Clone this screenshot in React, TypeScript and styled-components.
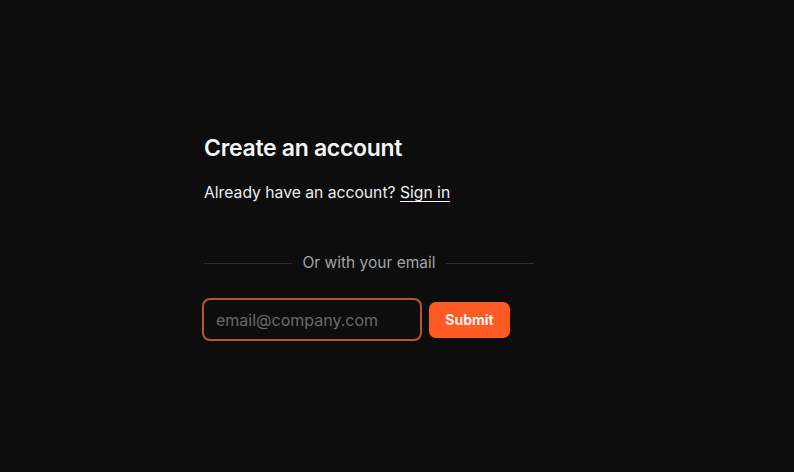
import React from 'react';
import styled, { createGlobalStyle } from 'styled-components';

const GlobalStyle = createGlobalStyle`
  html, body {
    margin: 0;
    padding: 0;
    background: #0d0d0d;
  }
  body {
    font-family: Inter, "Liberation Sans", sans-serif;
    color: #f2f2f2;
  }
`;

const Page = styled.div`
  min-height: 472px;
  display: flex;
  justify-content: center;
  padding-top: 133px;
  box-sizing: border-box;
`;

const Panel = styled.div`
  width: 386px;
  display: flex;
  flex-direction: column;
`;

const Title = styled.h1`
  margin: 0;
  font-size: 23px;
  line-height: 30px;
  font-weight: 600;
  letter-spacing: -0.3px;
  color: #f4f4f4;
`;

const Subtitle = styled.p`
  margin: 18px 0 0;
  font-size: 15.7px;
  line-height: 24px;
  color: #ececec;

  a {
    color: #f4f4f4;
    text-decoration: underline;
    text-underline-offset: 3px;
  }
`;

const Divider = styled.div`
  width: 330px;
  margin-top: 47px;
  display: flex;
  align-items: center;
  gap: 11px;
  font-size: 15.5px;
  line-height: 22px;
  color: #a3a3a3;

  &::before,
  &::after {
    content: '';
    flex: 1;
    height: 1px;
    background: #2e2e2e;
  }
`;

const Form = styled.form`
  margin-top: 24px;
  display: flex;
  align-items: center;
  gap: 7px;
`;

const EmailInput = styled.input`
  width: 220px;
  height: 43px;
  box-sizing: border-box;
  margin-left: -2px;
  padding: 0 12px;
  background: #0d0d0d;
  border: 2px solid #b4553a;
  border-radius: 8px;
  font-family: Inter, "Liberation Sans", sans-serif;
  font-size: 16px;
  color: #f2f2f2;
  outline: none;

  &::placeholder {
    color: #6a6a6a;
  }
`;

const SubmitButton = styled.button`
  width: 81px;
  height: 36px;
  border: none;
  border-radius: 7px;
  background: #ff5a23;
  color: #fff3ee;
  font-family: Inter, "Liberation Sans", sans-serif;
  font-size: 14px;
  font-weight: 700;
  cursor: pointer;
`;

export default function App() {
  return (
    <>
      <GlobalStyle />
      <Page>
        <Panel>
          <Title>Create an account</Title>
          <Subtitle>
            Already have an account? <a href="#">Sign in</a>
          </Subtitle>
          <Divider>Or with your email</Divider>
          <Form onSubmit={(e) => e.preventDefault()}>
            <EmailInput type="email" placeholder="email@company.com" autoFocus />
            <SubmitButton type="submit">Submit</SubmitButton>
          </Form>
        </Panel>
      </Page>
    </>
  );
}
